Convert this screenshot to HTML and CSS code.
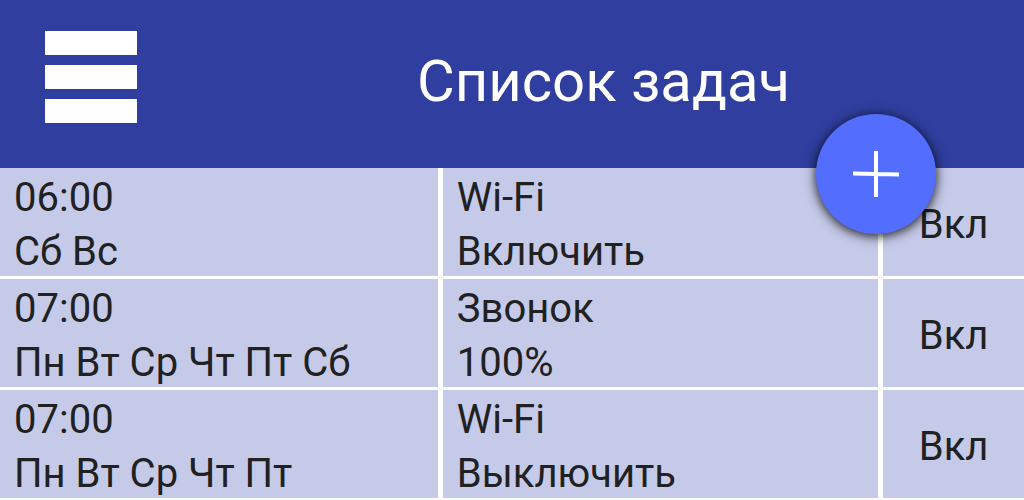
FILE: index.html
```html
<!DOCTYPE html>
<html lang="ru">
<head>
<meta charset="utf-8">
<meta name="viewport" content="width=device-width, initial-scale=1">
<title>Список задач</title>
<link rel="stylesheet" href="styles.css">
</head>
<body>
<header class="bar">
  <button class="menu" type="button" aria-label="Меню">
    <span class="menu-line"></span><span class="menu-line"></span><span class="menu-line"></span>
  </button>
  <h1 class="title">Список задач</h1>
  <button class="add" type="button" aria-label="Добавить">
    <svg class="plus" viewBox="0 0 46 46" aria-hidden="true"><path d="M23 0V46M0 22.6L46 23.4"/></svg>
  </button>
</header>
<main>
  <table class="tasks">
    <colgroup><col class="col-time"><col class="col-action"><col class="col-state"></colgroup>
    <tbody>
      <tr>
        <td><div class="line">06:00</div><div class="line">Сб Вс</div></td>
        <td><div class="line">Wi-Fi</div><div class="line">Включить</div></td>
        <td class="state"><div class="line">Вкл</div></td>
      </tr>
      <tr>
        <td><div class="line">07:00</div><div class="line">Пн Вт Ср Чт Пт Сб</div></td>
        <td><div class="line">Звонок</div><div class="line">100%</div></td>
        <td class="state"><div class="line">Вкл</div></td>
      </tr>
      <tr>
        <td><div class="line">07:00</div><div class="line">Пн Вт Ср Чт Пт</div></td>
        <td><div class="line">Wi-Fi</div><div class="line">Выключить</div></td>
        <td class="state"><div class="line">Вкл</div></td>
      </tr>
    </tbody>
  </table>
</main>
</body>
</html>
```
FILE: styles.css
```css
* { box-sizing: border-box; }
body {
  margin: 0;
  background: #fff;
  color: #212121;
  font-family: Roboto, "Noto Sans", sans-serif;
}
.bar {
  position: relative;
  display: flex;
  align-items: center;
  height: 168px;
  padding: 0 45px 14px;
  background: #303f9f;
}
.menu {
  display: flex;
  flex-direction: column;
  gap: 10px;
  width: 92px;
  padding: 0;
  border: 0;
  background: none;
}
.menu-line { height: 24px; background: #fff; }
.title {
  flex: 1;
  margin: 8px 0 0;
  padding-left: 91px;
  color: #fff;
  text-align: center;
  font-size: 58px;
  font-weight: 400;
  line-height: 64px;
}
.add {
  position: absolute;
  right: 88px;
  bottom: -66px;
  display: grid;
  place-items: center;
  width: 120px;
  height: 120px;
  padding: 0;
  border: 0;
  border-radius: 50%;
  background: #536dfe;
  box-shadow: 0 2px 10px 1px rgba(0, 0, 0, 0.75), 0 2px 10px 10px rgba(0, 0, 0, 0.04);
}
.plus { width: 46px; height: 46px; fill: none; stroke: #fff; stroke-width: 4; }
.tasks { width: 100%; border-collapse: collapse; table-layout: fixed; }
.col-time, .col-action { width: 43%; }
.col-state { width: 14%; }
.tasks td {
  padding: 0 14px;
  background: #c5cae9;
  border-bottom: 3px solid #fff;
  border-right: 5px solid #fff;
  font-size: 40px;
  line-height: 48px;
  white-space: nowrap;
}
.line { padding-top: 6px; }
.tasks .state { border-right: 0; text-align: center; }
```
